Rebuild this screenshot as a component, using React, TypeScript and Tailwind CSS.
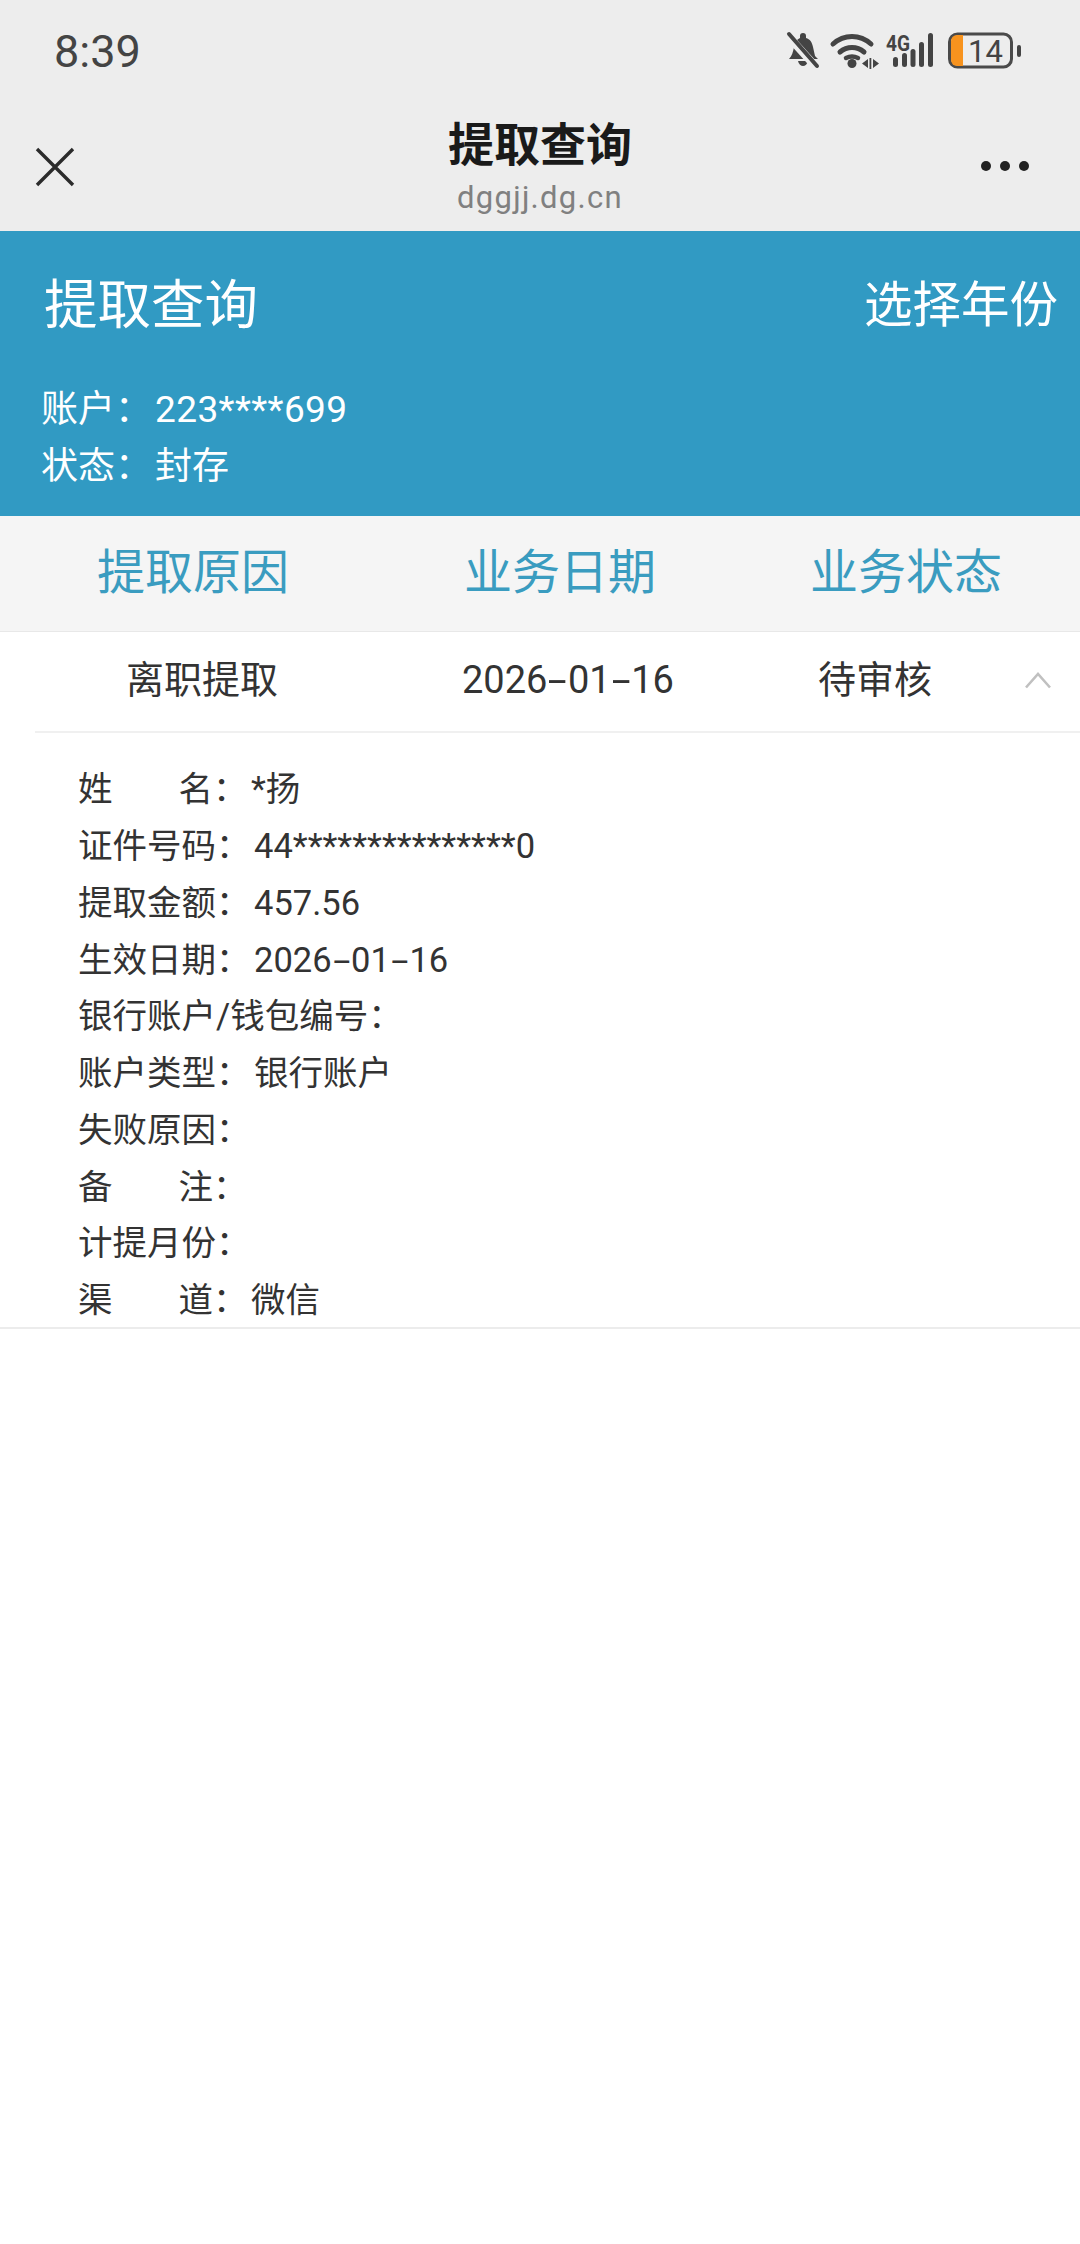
import React from "react";

const CJK = "font-['Roboto','Noto_Sans_CJK_SC',sans-serif]";

function Hyphen() {
  return <span className="mx-[5px] inline-block scale-x-[1.8]">-</span>;
}

function DateText() {
  return (
    <span>
      2026
      <Hyphen />
      01
      <Hyphen />
      16
    </span>
  );
}

function Detail({ label, value, spaced }: { label: string; value?: React.ReactNode; spaced?: boolean }) {
  return (
    <div className="flex h-[56.8px] items-center whitespace-pre">
      {spaced ? (
        <span className="flex w-[135px] justify-between">
          <span>{label[0]}</span>
          <span>{label[1]}</span>
        </span>
      ) : (
        <span>{label}</span>
      )}
      <span className="w-[38px]">：</span>
      <span>{value}</span>
    </div>
  );
}

function StatusIcons() {
  return (
    <svg width="240" height="44" viewBox="0 0 240 44" className="absolute left-[785px] top-[30px]">
      <g fill="#444">
        <path d="M4 29c3-3 4-7 5-12 1-5 3-8 6-9V6a3 3 0 0 1 6 0v2c4 1 6 4 7 9l2 9 3 3z" />
        <path d="M13 31h10c-.5 3-3 5-5 5s-4.500-2-5-5z" />
      </g>
      <path d="M3 6 31 37" stroke="#ededed" strokeWidth="8" />
      <path d="M4 4 32 36" stroke="#444" strokeWidth="4" strokeLinecap="round" />
      <g fill="none" stroke="#444" strokeWidth="5" strokeLinecap="round">
        <path d="M48 14c11-10 27-10 38 0" />
        <path d="M55 22c7-6 17-6 24 0" />
      </g>
      <path d="M61 28c4-2 8-2 12 0" fill="none" stroke="#444" strokeWidth="4.500" strokeLinecap="round" />
      <circle cx="67" cy="33.500" r="4.500" fill="#444" />
      <path d="M77 33.500 83 29v9zM84.500 28h1.800v11h-1.800zM88 29l6 4.500-6 4.500z" fill="#444" />
      <text
        x="101"
        y="21"
        fontFamily="Roboto, sans-serif"
        fontWeight="700"
        fontSize="22"
        textLength="24"
        lengthAdjust="spacingAndGlyphs"
        fill="#444"
      >
        4G
      </text>
      <g fill="#444">
        <rect x="108" y="27" width="5" height="10" rx="2.500" />
        <rect x="117" y="23" width="5" height="14" rx="2.500" />
        <rect x="125.500" y="19" width="5" height="18" rx="2.500" />
        <rect x="134" y="12" width="5" height="25" rx="2.500" />
        <rect x="143" y="3" width="5" height="34" rx="2.500" />
      </g>
      <rect x="164.500" y="4" width="62" height="33" rx="8" fill="none" stroke="#4a4a4a" strokeWidth="3" />
      <path d="M166 11a6 6 0 0 1 6-6h6v31h-6a6 6 0 0 1-6-6z" fill="#f7931e" />
      <text x="183" y="32" fontFamily="Roboto, sans-serif" fontSize="31" fill="#444">
        14
      </text>
      <rect x="232" y="15" width="4" height="12" rx="2" fill="#444" />
    </svg>
  );
}

export default function App() {
  return (
    <div className={`relative min-h-[2244px] w-[1080px] overflow-hidden bg-white ${CJK}`}>
      <div className="relative h-[231px] bg-[#ededed]">
        <div className="absolute left-[54px] top-[24px] text-[45px] leading-[56px] text-[#444]">8:39</div>
        <StatusIcons />
        <svg width="40" height="40" viewBox="0 0 40 40" className="absolute left-[35px] top-[147px]">
          <path d="M2 2 38 38M38 2 2 38" stroke="#2b2b2b" strokeWidth="3.400" />
        </svg>
        <div className="absolute inset-x-0 top-[117px] text-center text-[46px] leading-[56px] font-bold text-[#1a1a1a]">
          提取查询
        </div>
        <div className="absolute inset-x-0 top-[177px] text-center text-[31px] leading-[42px] tracking-[1.300px] text-[#808080]">
          dggjj.dg.cn
        </div>
        <div className="absolute left-[981px] top-[161px] flex gap-[9px]">
          <span className="size-[10px] rounded-full bg-[#222]" />
          <span className="size-[10px] rounded-full bg-[#222]" />
          <span className="size-[10px] rounded-full bg-[#222]" />
        </div>
      </div>

      <div className="h-[285px] bg-[#319ac3] pl-[41px] pr-[22px] text-white">
        <div className="flex h-[150px] items-center justify-between">
          <span className="ml-[3px] text-[53.500px] leading-[70px]">提取查询</span>
          <span className="text-[48.500px] leading-[70px]">选择年份</span>
        </div>
        <div className="flex h-[58px] items-center text-[37px]">
          <span>账户</span>
          <span className="w-[40px]">：</span>
          <span className="tracking-[0.4px]">223****699</span>
        </div>
        <div className="flex h-[56px] items-center text-[37px]">
          <span>状态</span>
          <span className="w-[40px]">：</span>
          <span>封存</span>
        </div>
      </div>

      <div className="grid h-[116px] grid-cols-[386px_346px_1fr] items-center border-b border-[#e8e8e8] bg-[#f5f5f5] pb-[2px] text-[48px] text-[#3a9cc0]">
        <span className="pl-[97px]">提取原因</span>
        <span className="pl-[78px]">业务日期</span>
        <span className="pl-[78px]">业务状态</span>
      </div>

      <div className="border-b-2 border-[#ececec]">
        <div className="ml-[35px] grid h-[101px] grid-cols-[427px_356px_1fr] items-center border-b-2 border-[#f0f0f0] pb-[2px] text-[38px] text-[#333]">
          <span className="pl-[91px]">离职提取</span>
          <DateText />
          <span className="flex items-center">
            <span className="w-[206px]">待审核</span>
            <svg width="28" height="17" viewBox="0 0 28 17">
              <path d="M2 15.500 14 2l12 13.500" fill="none" stroke="#c0c0c0" strokeWidth="2.600" />
            </svg>
          </span>
        </div>
        <div className="h-[594px] pl-[78px] pt-[28.600px] text-[34.500px] text-[#333]">
          <Detail label="姓名" value="*扬" spaced />
          <Detail label="证件号码" value="44***************0" />
          <Detail label="提取金额" value="457.56" />
          <Detail label="生效日期" value={<DateText />} />
          <Detail label="银行账户/钱包编号" />
          <Detail label="账户类型" value="银行账户" />
          <Detail label="失败原因" />
          <Detail label="备注" spaced />
          <Detail label="计提月份" />
          <Detail label="渠道" value="微信" spaced />
        </div>
      </div>
    </div>
  );
}
